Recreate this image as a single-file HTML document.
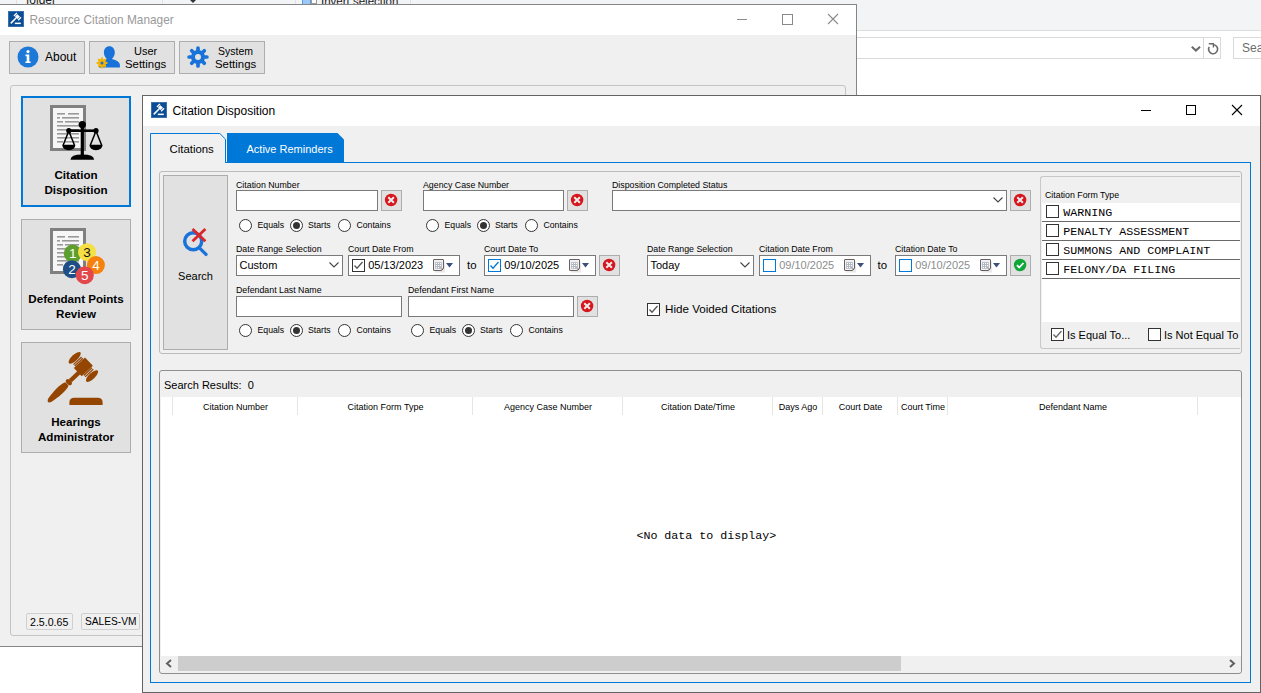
<!DOCTYPE html>
<html><head><meta charset="utf-8"><style>
html,body{margin:0;padding:0;width:1261px;height:693px;overflow:hidden;background:#fff}
body>div{position:absolute}
</style></head><body>
<div style="left:0px;top:0px;width:1261px;height:693px;background:#fff"></div>
<div style="left:0px;top:0px;width:1261px;height:4px;background:#f3f4f6"></div>
<div style="left:16px;top:0px;width:1px;height:4px;background:#e3e3e3"></div>
<div style="left:162px;top:0px;width:1px;height:4px;background:#e3e3e3"></div>
<div style="left:295px;top:0px;width:1px;height:4px;background:#e3e3e3"></div>
<div style="left:410px;top:0px;width:1px;height:4px;background:#e3e3e3"></div>
<div style="left:26px;top:-0.16px;font:400 12px 'Liberation Sans', sans-serif;color:#222;line-height:0;white-space:pre;text-align:left;">folder</div>
<div style="left:302px;top:0px;width:9px;height:4px;background:#9cc8f5;border-left:1px solid #5a9de0;border-right:1px solid #5a9de0;box-sizing:border-box"></div>
<div style="left:311px;top:0px;width:6px;height:4px;background:#fff;border:1px solid #9a9a9a;border-top:none;box-sizing:border-box"></div>
<div style="left:321px;top:0.52px;font:400 11.5px 'Liberation Sans', sans-serif;color:#222;line-height:0;white-space:pre;text-align:left;">Invert selection</div>
<svg style="position:absolute;left:189px;top:0px;" width="8" height="4" viewBox="0 0 8 4"><path d="M1 0 L4 3 L7 0 Z" fill="#333"/></svg>
<div style="left:857px;top:0px;width:404px;height:30px;background:#f3f4f6"></div>
<div style="left:857px;top:30px;width:404px;height:1px;background:#dedede"></div>
<div style="left:857px;top:37px;width:364px;height:22px;background:#fff;border:1px solid #d9d9d9;border-left:none;box-sizing:border-box"></div>
<div style="left:1203px;top:37px;width:1px;height:22px;background:#d9d9d9"></div>
<div style="left:1233px;top:37px;width:28px;height:22px;background:#fff;border:1px solid #d9d9d9;border-right:none;box-sizing:border-box"></div>
<div style="left:1242px;top:47.84px;font:400 12px 'Liberation Sans', sans-serif;color:#6d6d6d;line-height:0;white-space:pre;text-align:left;">Sea</div>
<svg style="position:absolute;left:1190px;top:43px;" width="12" height="10" viewBox="0 0 12 10"><path d="M1.8 3.8 L5.9 7.6 L10 3.8" stroke="#6a6a6a" stroke-width="2" fill="none"/></svg>
<svg style="position:absolute;left:1205px;top:40px;" width="16" height="16" viewBox="0 0 16 16"><path d="M8.1 4.7 A4.5 4.5 0 1 1 4.2 6.95" stroke="#6a6a6a" stroke-width="1.6" fill="none"/><path d="M3.8 3.7 H8.4 V7.4" stroke="#6a6a6a" stroke-width="1.4" fill="none"/></svg>
<div style="left:0px;top:4px;width:857px;height:643px;background:#f0f0f0;border:1px solid #858585;border-left:none;box-sizing:border-box"></div>
<div style="left:0px;top:5px;width:856px;height:30px;background:#fff"></div>
<svg style="position:absolute;left:8px;top:11px;" width="16" height="16" viewBox="0 0 16 16"><rect width="16" height="16" fill="#3a6fae"/><rect x="1" y="1" width="14" height="14" fill="#0b4d94"/><g transform="translate(9.5 5.6) rotate(45)" fill="#fff"><rect x="-1.8" y="-1.7" width="3.6" height="3.4"/><rect x="-3.6" y="-2.1" width="1.3" height="4.2"/><rect x="2.3" y="-2.1" width="1.3" height="4.2"/><rect x="-0.75" y="1" width="1.5" height="8.6" rx="0.75"/></g><rect x="6.8" y="11.6" width="6" height="1.5" fill="#fff"/></svg>
<div style="left:29.5px;top:19.89px;font:400 11.85px 'Liberation Sans', sans-serif;color:#9a9a9a;line-height:0;white-space:pre;text-align:left;">Resource Citation Manager</div>
<div style="left:737px;top:19px;width:10px;height:1px;background:#8a8a8a"></div>
<div style="left:782px;top:14px;width:11px;height:11px;border:1px solid #8a8a8a;box-sizing:border-box"></div>
<svg style="position:absolute;left:827px;top:13px;" width="12" height="12" viewBox="0 0 12 12"><path d="M1 1 L11 11 M11 1 L1 11" stroke="#8a8a8a" stroke-width="1.1"/></svg>
<div style="left:9px;top:41px;width:76px;height:33px;background:#e1e1e1;border:1px solid #adadad;box-sizing:border-box;"></div>
<svg style="position:absolute;left:17px;top:46px;" width="22" height="22" viewBox="0 0 22 22"><circle cx="11" cy="11" r="10.5" fill="#1e78d7"/><circle cx="11" cy="5.6" r="1.6" fill="#fff"/><path d="M8.5 8.6 H12.3 V15.4 H13.6 V17 H8.4 V15.4 H9.7 V10.2 H8.5 Z" fill="#fff"/></svg>
<div style="left:45px;top:56.84px;font:400 12px 'Liberation Sans', sans-serif;color:#000;line-height:0;white-space:pre;text-align:left;">About</div>
<div style="left:89px;top:41px;width:86px;height:33px;background:#e1e1e1;border:1px solid #adadad;box-sizing:border-box;"></div>
<svg style="position:absolute;left:94px;top:44px;" width="30" height="26" viewBox="0 0 30 26"><path d="M15.35 2.2 C18.6 2.2 20.8 4.8 20.8 8.3 C20.8 11 19.8 13 18.3 14.3 L18.3 15.2 C22 16 25.8 17.5 25.9 21 L25.9 23.4 L5 23.4 L5 21 C5.5 17.5 9 16 12.4 15.2 L12.4 14.3 C10.9 13 9.9 11 9.9 8.3 C9.9 4.8 12.1 2.2 15.35 2.2 Z" fill="#1872d9"/><g transform="translate(8 18.9)"><circle r="3.9" fill="#f5b400"/><g stroke="#f5b400" stroke-width="2" stroke-linecap="round"><path d="M3.00 0.00 L4.60 0.00"/><path d="M2.12 2.12 L3.25 3.25"/><path d="M0.00 3.00 L0.00 4.60"/><path d="M-2.12 2.12 L-3.25 3.25"/><path d="M-3.00 0.00 L-4.60 0.00"/><path d="M-2.12 -2.12 L-3.25 -3.25"/><path d="M-0.00 -3.00 L-0.00 -4.60"/><path d="M2.12 -2.12 L3.25 -3.25"/></g><circle r="1.5" fill="#1872d9"/></g></svg>
<div style="left:134px;top:51.19px;font:400 11px 'Liberation Sans', sans-serif;color:#000;line-height:0;white-space:pre;text-align:left;">User</div>
<div style="left:125px;top:63.55px;font:400 11.4px 'Liberation Sans', sans-serif;color:#000;line-height:0;white-space:pre;text-align:left;">Settings</div>
<div style="left:179px;top:41px;width:86px;height:33px;background:#e1e1e1;border:1px solid #adadad;box-sizing:border-box;"></div>
<svg style="position:absolute;left:187px;top:46px;" width="22" height="22" viewBox="0 0 22 22"><circle cx="11" cy="11" r="7" fill="#1872d9"/><g stroke="#1872d9" stroke-width="3.7" stroke-linecap="round"><path d="M16.00 11.00 L19.90 11.00"/><path d="M14.54 14.54 L17.29 17.29"/><path d="M11.00 16.00 L11.00 19.90"/><path d="M7.46 14.54 L4.71 17.29"/><path d="M6.00 11.00 L2.10 11.00"/><path d="M7.46 7.46 L4.71 4.71"/><path d="M11.00 6.00 L11.00 2.10"/><path d="M14.54 7.46 L17.29 4.71"/></g><circle cx="11" cy="11" r="3" fill="#e1e1e1"/></svg>
<div style="left:218px;top:51.36px;font:400 10.5px 'Liberation Sans', sans-serif;color:#000;line-height:0;white-space:pre;text-align:left;">System</div>
<div style="left:215px;top:63.55px;font:400 11.4px 'Liberation Sans', sans-serif;color:#000;line-height:0;white-space:pre;text-align:left;">Settings</div>
<div style="left:10px;top:85px;width:836px;height:551px;border:1px solid #c4c4c4;border-radius:3px;box-sizing:border-box"></div>
<div style="left:21px;top:96px;width:110px;height:111px;background:#e1e1e1;border:2px solid #0078d7;box-sizing:border-box"></div>
<div style="left:21px;top:219px;width:110px;height:111px;background:#e1e1e1;border:1px solid #adadad;box-sizing:border-box;"></div>
<div style="left:21px;top:342px;width:110px;height:111px;background:#e1e1e1;border:1px solid #adadad;box-sizing:border-box;"></div>
<svg style="position:absolute;left:50px;top:105px;" width="36" height="46" viewBox="0 0 36 46"><rect x="0" y="0" width="36" height="46" fill="#808080"/><rect x="3" y="3" width="30" height="40" fill="#f6f6f6"/><rect x="7" y="8" width="8" height="1.6" fill="#9a9a9a"/><rect x="18" y="8" width="11" height="1.6" fill="#9a9a9a"/><rect x="7" y="12" width="3" height="1.6" fill="#9a9a9a"/><rect x="12" y="12" width="17" height="1.6" fill="#9a9a9a"/><rect x="7" y="16" width="6" height="1.6" fill="#9a9a9a"/><rect x="15" y="16" width="14" height="1.6" fill="#9a9a9a"/><rect x="7" y="20" width="22" height="1.6" fill="#9a9a9a"/><rect x="7" y="24" width="22" height="1.6" fill="#9a9a9a"/><rect x="7" y="28" width="22" height="1.6" fill="#9a9a9a"/><rect x="7" y="32" width="22" height="1.6" fill="#9a9a9a"/><rect x="7" y="36" width="6" height="1.6" fill="#9a9a9a"/><rect x="15" y="36" width="14" height="1.6" fill="#9a9a9a"/></svg>
<svg style="position:absolute;left:58px;top:118px;" width="48" height="44" viewBox="0 0 48 44"><g fill="#000"><circle cx="24.3" cy="6.6" r="3.7"/><rect x="22.7" y="6" width="3.2" height="33"/><rect x="10.8" y="11.4" width="27.2" height="2.6"/><circle cx="10.8" cy="12.7" r="2.6"/><circle cx="38" cy="12.7" r="2.6"/><path d="M4.2 26.8 H17.4 Q17 32.2 10.8 32.2 Q4.6 32.2 4.2 26.8 Z M31.4 26.8 H44.6 Q44.2 32.2 38 32.2 Q31.8 32.2 31.4 26.8 Z"/><path d="M12.5 41.8 Q12.5 36.6 24.3 36.6 Q36.1 36.6 36.1 41.8 Z"/></g><path d="M10.8 13 L5.2 27 M10.8 13 L16.4 27 M38 13 L32.4 27 M38 13 L43.6 27" stroke="#000" stroke-width="1.5" fill="none"/></svg>
<div style="left:21px;top:175.48px;width:110px;font:700 11.6px 'Liberation Sans', sans-serif;color:#000;line-height:0;white-space:pre;text-align:center;">Citation</div>
<div style="left:21px;top:190.48px;width:110px;font:700 11.6px 'Liberation Sans', sans-serif;color:#000;line-height:0;white-space:pre;text-align:center;">Disposition</div>
<svg style="position:absolute;left:50px;top:228px;" width="36" height="46" viewBox="0 0 36 46"><rect x="0" y="0" width="36" height="46" fill="#808080"/><rect x="3" y="3" width="30" height="40" fill="#f6f6f6"/><rect x="7" y="8" width="8" height="1.6" fill="#9a9a9a"/><rect x="18" y="8" width="11" height="1.6" fill="#9a9a9a"/><rect x="7" y="12" width="3" height="1.6" fill="#9a9a9a"/><rect x="12" y="12" width="17" height="1.6" fill="#9a9a9a"/><rect x="7" y="16" width="6" height="1.6" fill="#9a9a9a"/><rect x="15" y="16" width="14" height="1.6" fill="#9a9a9a"/><rect x="7" y="20" width="22" height="1.6" fill="#9a9a9a"/><rect x="7" y="24" width="22" height="1.6" fill="#9a9a9a"/><rect x="7" y="28" width="22" height="1.6" fill="#9a9a9a"/><rect x="7" y="32" width="22" height="1.6" fill="#9a9a9a"/><rect x="7" y="36" width="6" height="1.6" fill="#9a9a9a"/><rect x="15" y="36" width="14" height="1.6" fill="#9a9a9a"/></svg>
<svg style="position:absolute;left:60px;top:240px;" width="50" height="50" viewBox="0 0 50 50"><circle cx="12.8" cy="13.5" r="9" fill="#5d9e2c"/><text x="12.8" y="18.3" font-family="Liberation Sans" font-size="13.5" fill="#fff" text-anchor="middle">1</text><circle cx="27.1" cy="12.2" r="9" fill="#f6df45"/><text x="27.1" y="17.0" font-family="Liberation Sans" font-size="13.5" fill="#111" text-anchor="middle">3</text><circle cx="35.9" cy="25.1" r="9" fill="#f6820d"/><text x="35.9" y="29.900000000000002" font-family="Liberation Sans" font-size="13.5" fill="#fff" text-anchor="middle">4</text><circle cx="11.9" cy="29.2" r="9" fill="#1f4d86"/><text x="11.9" y="34.0" font-family="Liberation Sans" font-size="13.5" fill="#fff" text-anchor="middle">2</text><circle cx="24.8" cy="35.2" r="9" fill="#e2474b"/><text x="24.8" y="40.0" font-family="Liberation Sans" font-size="13.5" fill="#fff" text-anchor="middle">5</text></svg>
<div style="left:21px;top:298.58px;width:110px;font:700 11.6px 'Liberation Sans', sans-serif;color:#000;line-height:0;white-space:pre;text-align:center;">Defendant Points</div>
<div style="left:21px;top:313.58px;width:110px;font:700 11.6px 'Liberation Sans', sans-serif;color:#000;line-height:0;white-space:pre;text-align:center;">Review</div>
<svg style="position:absolute;left:44px;top:346px;" width="64" height="64" viewBox="0 0 64 64"><g fill="#944500"><g transform="translate(39.35 20.9) rotate(46.5)"><ellipse cx="-12.6" cy="0" rx="3" ry="7.9"/><ellipse cx="12.6" cy="0" rx="3" ry="7.9"/><rect x="-9.1" y="-5.6" width="1.3" height="11.2"/><rect x="-7.2" y="-5.6" width="1.3" height="11.2"/><rect x="7.8" y="-5.6" width="1.3" height="11.2"/><rect x="5.9" y="-5.6" width="1.3" height="11.2"/><rect x="-5.7" y="-7.7" width="11.4" height="15.4"/><rect x="-1.1" y="7" width="4.4" height="12"/><ellipse cx="1.1" cy="21" rx="3.6" ry="2.3"/><path d="M-1.2 23.6 C-3.6 28 -2.8 40 -1.2 47.5 Q1.1 52 3.4 47.5 C5.0 40 5.8 28 3.4 23.6 Z"/></g><path d="M25.4 59.1 V56.2 Q25.4 51.7 30.4 51.7 H53.6 Q58.6 51.7 58.6 56.2 V59.1 Z"/></g></svg>
<div style="left:21px;top:421.68px;width:110px;font:700 11.6px 'Liberation Sans', sans-serif;color:#000;line-height:0;white-space:pre;text-align:center;">Hearings</div>
<div style="left:21px;top:436.68px;width:110px;font:700 11.6px 'Liberation Sans', sans-serif;color:#000;line-height:0;white-space:pre;text-align:center;">Administrator</div>
<div style="left:26px;top:613px;width:47px;height:17px;border:1px solid #cfcfcf;border-radius:2px;box-sizing:border-box"></div>
<div style="left:30px;top:622.33px;font:400 10.6px 'Liberation Sans', sans-serif;color:#000;line-height:0;white-space:pre;text-align:left;">2.5.0.65</div>
<div style="left:81px;top:613px;width:59px;height:17px;border:1px solid #cfcfcf;border-radius:2px;box-sizing:border-box"></div>
<div style="left:85px;top:622.47px;font:400 10.2px 'Liberation Sans', sans-serif;color:#000;line-height:0;white-space:pre;text-align:left;">SALES-VM</div>
<div style="left:142px;top:95px;width:1119px;height:598px;background:#f0f0f0;border:1px solid #646464;box-sizing:border-box"></div>
<div style="left:143px;top:96px;width:1117px;height:30px;background:#fff"></div>
<svg style="position:absolute;left:151px;top:102px;" width="16" height="16" viewBox="0 0 16 16"><rect width="16" height="16" fill="#3a6fae"/><rect x="1" y="1" width="14" height="14" fill="#0b4d94"/><g transform="translate(9.5 5.6) rotate(45)" fill="#fff"><rect x="-1.8" y="-1.7" width="3.6" height="3.4"/><rect x="-3.6" y="-2.1" width="1.3" height="4.2"/><rect x="2.3" y="-2.1" width="1.3" height="4.2"/><rect x="-0.75" y="1" width="1.5" height="8.6" rx="0.75"/></g><rect x="6.8" y="11.6" width="6" height="1.5" fill="#fff"/></svg>
<div style="left:172.5px;top:110.84px;font:400 12px 'Liberation Sans', sans-serif;color:#000;line-height:0;white-space:pre;text-align:left;">Citation Disposition</div>
<div style="left:1141px;top:110px;width:10px;height:1px;background:#000"></div>
<div style="left:1186px;top:105px;width:10px;height:10px;border:1px solid #000;box-sizing:border-box"></div>
<svg style="position:absolute;left:1231px;top:104px;" width="12" height="12" viewBox="0 0 12 12"><path d="M1 1 L11 11 M11 1 L1 11" stroke="#000" stroke-width="1.1"/></svg>
<!--TABS-->
<div style="left:150px;top:162px;width:1101px;height:521px;border:1px solid #0078d7;box-sizing:border-box"></div>
<svg style="position:absolute;left:150px;top:133px;" width="77" height="30" viewBox="0 0 77 30"><path d="M0.5 30 V0.5 H69.8 L75.5 6.2 V29.5 H77" stroke="#0078d7" stroke-width="1" fill="#f0f0f0"/></svg>
<svg style="position:absolute;left:227px;top:133px;" width="117" height="29" viewBox="0 0 117 29"><path d="M0 0 H110.5 L117 6.5 V29 H0 Z" fill="#0078d7"/></svg>
<div style="left:151px;top:162px;width:74px;height:1px;background:#f0f0f0"></div>
<div style="left:169.5px;top:149.05px;font:400 11.4px 'Liberation Sans', sans-serif;color:#000;line-height:0;white-space:pre;text-align:left;">Citations</div>
<div style="left:246.5px;top:149.19px;font:400 11px 'Liberation Sans', sans-serif;color:#fff;line-height:0;white-space:pre;text-align:left;">Active Reminders</div>
<div style="left:159px;top:171px;width:1083px;height:183px;border:1px solid #bcbcbc;border-radius:3px;box-sizing:border-box"></div>
<div style="left:163px;top:175px;width:65px;height:175px;background:#e1e1e1;border:1px solid #adadad;box-sizing:border-box;"></div>
<svg style="position:absolute;left:180px;top:226px;" width="30" height="32" viewBox="0 0 30 32"><circle cx="13.2" cy="15.3" r="8.5" stroke="#1a73d9" stroke-width="3.5" fill="none"/><path d="M19.9 22.4 L26 28.4" stroke="#1a73d9" stroke-width="3.3" stroke-linecap="round"/><path d="M12.5 2.9 L25.4 15.2 M25.4 2.9 L12.5 15.2" stroke="#d9262b" stroke-width="2.8"/></svg>
<div style="left:163px;top:275.69px;width:65px;font:400 11px 'Liberation Sans', sans-serif;color:#000;line-height:0;white-space:pre;text-align:center;">Search</div>
<div style="left:236px;top:184.95px;font:400 8.8px 'Liberation Sans', sans-serif;color:#000;line-height:0;white-space:pre;text-align:left;">Citation Number</div>
<div style="left:236px;top:190px;width:142px;height:21px;background:#fff;border:1px solid #7a7a7a;box-sizing:border-box;"></div>
<div style="left:381px;top:190px;width:21px;height:21px;background:#e1e1e1;border:1px solid #adadad;box-sizing:border-box;"></div>
<svg style="position:absolute;left:381px;top:190px;" width="21" height="21" viewBox="0 0 21 21"><circle cx="10.1" cy="10.0" r="6.2" fill="#d8141c"/><path d="M7.3 7.2 L12.899999999999999 12.8 M12.899999999999999 7.2 L7.3 12.8" stroke="#ececec" stroke-width="2"/></svg>
<svg style="position:absolute;left:239px;top:218.8px;" width="13" height="13" viewBox="0 0 13 13"><circle cx="6.5" cy="6.5" r="6" stroke="#333" stroke-width="1" fill="#fff"/></svg>
<div style="left:257.5px;top:225.09px;font:400 8.7px 'Liberation Sans', sans-serif;color:#000;line-height:0;white-space:pre;text-align:left;">Equals</div>
<svg style="position:absolute;left:290px;top:218.8px;" width="13" height="13" viewBox="0 0 13 13"><circle cx="6.5" cy="6.5" r="6" stroke="#333" stroke-width="1" fill="#fff"/><circle cx="6.5" cy="6.5" r="3.5" fill="#333"/></svg>
<div style="left:308px;top:225.09px;font:400 8.7px 'Liberation Sans', sans-serif;color:#000;line-height:0;white-space:pre;text-align:left;">Starts</div>
<svg style="position:absolute;left:338px;top:218.8px;" width="13" height="13" viewBox="0 0 13 13"><circle cx="6.5" cy="6.5" r="6" stroke="#333" stroke-width="1" fill="#fff"/></svg>
<div style="left:356.5px;top:225.09px;font:400 8.7px 'Liberation Sans', sans-serif;color:#000;line-height:0;white-space:pre;text-align:left;">Contains</div>
<div style="left:423px;top:184.95px;font:400 8.8px 'Liberation Sans', sans-serif;color:#000;line-height:0;white-space:pre;text-align:left;">Agency Case Number</div>
<div style="left:423px;top:190px;width:141px;height:21px;background:#fff;border:1px solid #7a7a7a;box-sizing:border-box;"></div>
<div style="left:567px;top:190px;width:21px;height:21px;background:#e1e1e1;border:1px solid #adadad;box-sizing:border-box;"></div>
<svg style="position:absolute;left:567px;top:190px;" width="21" height="21" viewBox="0 0 21 21"><circle cx="10.1" cy="10.0" r="6.2" fill="#d8141c"/><path d="M7.3 7.2 L12.899999999999999 12.8 M12.899999999999999 7.2 L7.3 12.8" stroke="#ececec" stroke-width="2"/></svg>
<svg style="position:absolute;left:426px;top:218.8px;" width="13" height="13" viewBox="0 0 13 13"><circle cx="6.5" cy="6.5" r="6" stroke="#333" stroke-width="1" fill="#fff"/></svg>
<div style="left:444.5px;top:225.09px;font:400 8.7px 'Liberation Sans', sans-serif;color:#000;line-height:0;white-space:pre;text-align:left;">Equals</div>
<svg style="position:absolute;left:477px;top:218.8px;" width="13" height="13" viewBox="0 0 13 13"><circle cx="6.5" cy="6.5" r="6" stroke="#333" stroke-width="1" fill="#fff"/><circle cx="6.5" cy="6.5" r="3.5" fill="#333"/></svg>
<div style="left:495px;top:225.09px;font:400 8.7px 'Liberation Sans', sans-serif;color:#000;line-height:0;white-space:pre;text-align:left;">Starts</div>
<svg style="position:absolute;left:525px;top:218.8px;" width="13" height="13" viewBox="0 0 13 13"><circle cx="6.5" cy="6.5" r="6" stroke="#333" stroke-width="1" fill="#fff"/></svg>
<div style="left:543.5px;top:225.09px;font:400 8.7px 'Liberation Sans', sans-serif;color:#000;line-height:0;white-space:pre;text-align:left;">Contains</div>
<div style="left:612px;top:184.95px;font:400 8.8px 'Liberation Sans', sans-serif;color:#000;line-height:0;white-space:pre;text-align:left;">Disposition Completed Status</div>
<div style="left:612px;top:190px;width:395px;height:21px;background:#fff;border:1px solid #7a7a7a;box-sizing:border-box;"></div>
<svg style="position:absolute;left:993px;top:197px;" width="10" height="6" viewBox="0 0 10 6"><path d="M0.5 0.5 L5 5 L9.5 0.5" stroke="#444" stroke-width="1.1" fill="none"/></svg>
<div style="left:1010px;top:190px;width:21px;height:21px;background:#e1e1e1;border:1px solid #adadad;box-sizing:border-box;"></div>
<svg style="position:absolute;left:1010px;top:190px;" width="21" height="21" viewBox="0 0 21 21"><circle cx="10.1" cy="10.0" r="6.2" fill="#d8141c"/><path d="M7.3 7.2 L12.899999999999999 12.8 M12.899999999999999 7.2 L7.3 12.8" stroke="#ececec" stroke-width="2"/></svg>
<div style="left:236px;top:248.95px;font:400 8.8px 'Liberation Sans', sans-serif;color:#000;line-height:0;white-space:pre;text-align:left;">Date Range Selection</div>
<div style="left:236px;top:255px;width:107px;height:21px;background:#fff;border:1px solid #7a7a7a;box-sizing:border-box;"></div>
<div style="left:239.5px;top:265.19px;font:400 11px 'Liberation Sans', sans-serif;color:#000;line-height:0;white-space:pre;text-align:left;">Custom</div>
<svg style="position:absolute;left:329px;top:262px;" width="10" height="6" viewBox="0 0 10 6"><path d="M0.5 0.5 L5 5 L9.5 0.5" stroke="#444" stroke-width="1.1" fill="none"/></svg>
<div style="left:348px;top:248.95px;font:400 8.8px 'Liberation Sans', sans-serif;color:#000;line-height:0;white-space:pre;text-align:left;">Court Date From</div>
<div style="left:348px;top:255px;width:112px;height:21px;background:#fff;border:1px solid #7a7a7a;box-sizing:border-box;"></div>
<svg style="position:absolute;left:352px;top:259px;" width="13" height="13" viewBox="0 0 13 13"><rect x="0.5" y="0.5" width="12" height="12" stroke="#333" stroke-width="1" fill="#fff"/><path d="M2.5 6.5 L5 9.2 L10.5 3" stroke="#555" stroke-width="1.3" fill="none"/></svg>
<div style="left:368.2px;top:265.49px;font:400 11px 'Liberation Sans', sans-serif;color:#000;line-height:0;white-space:pre;text-align:left;">05/13/2023</div>
<svg style="position:absolute;left:433px;top:259px;" width="20" height="14" viewBox="0 0 20 14"><rect x="2" y="2.5" width="10" height="11" fill="#d9d9d9" opacity="0.6"/><path d="M1 0.5 H10 Q10.5 0.5 10.5 1 V9.5 L8.5 11.5 H1 Q0.5 11.5 0.5 11 V1 Q0.5 0.5 1 0.5 Z" stroke="#6b5f5c" stroke-width="1" fill="#eef1f8"/><rect x="2.1" y="3.1" width="6.7" height="6.7" fill="#b1b5bd"/><g fill="#fff"><rect x="2.9" y="3.9" width="1.1" height="1.1"/><rect x="5" y="3.9" width="1.1" height="1.1"/><rect x="7" y="3.9" width="1.1" height="1.1"/><rect x="2.9" y="6" width="1.1" height="1.1"/><rect x="5" y="6" width="1.1" height="1.1"/><rect x="7" y="6" width="1.1" height="1.1"/><rect x="2.9" y="8" width="1.1" height="1.1"/><rect x="5" y="8" width="1.1" height="1.1"/></g><path d="M8.5 11.5 V9.5 H10.5 Z" fill="#6b5f5c"/><path d="M13 4 H20 L16.5 8.5 Z" fill="#3c4f78"/></svg>
<div style="left:467px;top:265.05px;font:400 11.4px 'Liberation Sans', sans-serif;color:#000;line-height:0;white-space:pre;text-align:left;">to</div>
<div style="left:484px;top:248.95px;font:400 8.8px 'Liberation Sans', sans-serif;color:#000;line-height:0;white-space:pre;text-align:left;">Court Date To</div>
<div style="left:484px;top:255px;width:112px;height:21px;background:#fff;border:1px solid #7a7a7a;box-sizing:border-box;"></div>
<svg style="position:absolute;left:488px;top:259px;" width="13" height="13" viewBox="0 0 13 13"><rect x="0.5" y="0.5" width="12" height="12" stroke="#0078d7" stroke-width="1" fill="#fff"/><path d="M2.5 6.5 L5 9.2 L10.5 3" stroke="#0078d7" stroke-width="1.3" fill="none"/></svg>
<div style="left:504.2px;top:265.49px;font:400 11px 'Liberation Sans', sans-serif;color:#000;line-height:0;white-space:pre;text-align:left;">09/10/2025</div>
<svg style="position:absolute;left:569px;top:259px;" width="20" height="14" viewBox="0 0 20 14"><rect x="2" y="2.5" width="10" height="11" fill="#d9d9d9" opacity="0.6"/><path d="M1 0.5 H10 Q10.5 0.5 10.5 1 V9.5 L8.5 11.5 H1 Q0.5 11.5 0.5 11 V1 Q0.5 0.5 1 0.5 Z" stroke="#6b5f5c" stroke-width="1" fill="#eef1f8"/><rect x="2.1" y="3.1" width="6.7" height="6.7" fill="#b1b5bd"/><g fill="#fff"><rect x="2.9" y="3.9" width="1.1" height="1.1"/><rect x="5" y="3.9" width="1.1" height="1.1"/><rect x="7" y="3.9" width="1.1" height="1.1"/><rect x="2.9" y="6" width="1.1" height="1.1"/><rect x="5" y="6" width="1.1" height="1.1"/><rect x="7" y="6" width="1.1" height="1.1"/><rect x="2.9" y="8" width="1.1" height="1.1"/><rect x="5" y="8" width="1.1" height="1.1"/></g><path d="M8.5 11.5 V9.5 H10.5 Z" fill="#6b5f5c"/><path d="M13 4 H20 L16.5 8.5 Z" fill="#3c4f78"/></svg>
<div style="left:599px;top:255px;width:21px;height:21px;background:#e1e1e1;border:1px solid #adadad;box-sizing:border-box;"></div>
<svg style="position:absolute;left:599px;top:255px;" width="21" height="21" viewBox="0 0 21 21"><circle cx="10.1" cy="10.0" r="6.2" fill="#d8141c"/><path d="M7.3 7.2 L12.899999999999999 12.8 M12.899999999999999 7.2 L7.3 12.8" stroke="#ececec" stroke-width="2"/></svg>
<div style="left:647px;top:248.95px;font:400 8.8px 'Liberation Sans', sans-serif;color:#000;line-height:0;white-space:pre;text-align:left;">Date Range Selection</div>
<div style="left:647px;top:255px;width:107px;height:21px;background:#fff;border:1px solid #7a7a7a;box-sizing:border-box;"></div>
<div style="left:650.5px;top:265.19px;font:400 11px 'Liberation Sans', sans-serif;color:#000;line-height:0;white-space:pre;text-align:left;">Today</div>
<svg style="position:absolute;left:740px;top:262px;" width="10" height="6" viewBox="0 0 10 6"><path d="M0.5 0.5 L5 5 L9.5 0.5" stroke="#444" stroke-width="1.1" fill="none"/></svg>
<div style="left:759px;top:248.95px;font:400 8.8px 'Liberation Sans', sans-serif;color:#000;line-height:0;white-space:pre;text-align:left;">Citation Date From</div>
<div style="left:759px;top:255px;width:112px;height:21px;background:#fff;border:1px solid #7a7a7a;box-sizing:border-box;"></div>
<svg style="position:absolute;left:763px;top:259px;" width="13" height="13" viewBox="0 0 13 13"><rect x="0.5" y="0.5" width="12" height="12" stroke="#0078d7" stroke-width="1" fill="#fff"/></svg>
<div style="left:779.2px;top:265.49px;font:400 11px 'Liberation Sans', sans-serif;color:#8d8d8d;line-height:0;white-space:pre;text-align:left;">09/10/2025</div>
<svg style="position:absolute;left:844px;top:259px;" width="20" height="14" viewBox="0 0 20 14"><rect x="2" y="2.5" width="10" height="11" fill="#d9d9d9" opacity="0.6"/><path d="M1 0.5 H10 Q10.5 0.5 10.5 1 V9.5 L8.5 11.5 H1 Q0.5 11.5 0.5 11 V1 Q0.5 0.5 1 0.5 Z" stroke="#6b5f5c" stroke-width="1" fill="#eef1f8"/><rect x="2.1" y="3.1" width="6.7" height="6.7" fill="#b1b5bd"/><g fill="#fff"><rect x="2.9" y="3.9" width="1.1" height="1.1"/><rect x="5" y="3.9" width="1.1" height="1.1"/><rect x="7" y="3.9" width="1.1" height="1.1"/><rect x="2.9" y="6" width="1.1" height="1.1"/><rect x="5" y="6" width="1.1" height="1.1"/><rect x="7" y="6" width="1.1" height="1.1"/><rect x="2.9" y="8" width="1.1" height="1.1"/><rect x="5" y="8" width="1.1" height="1.1"/></g><path d="M8.5 11.5 V9.5 H10.5 Z" fill="#6b5f5c"/><path d="M13 4 H20 L16.5 8.5 Z" fill="#3c4f78"/></svg>
<div style="left:877.5px;top:265.05px;font:400 11.4px 'Liberation Sans', sans-serif;color:#000;line-height:0;white-space:pre;text-align:left;">to</div>
<div style="left:895px;top:248.95px;font:400 8.8px 'Liberation Sans', sans-serif;color:#000;line-height:0;white-space:pre;text-align:left;">Citation Date To</div>
<div style="left:895px;top:255px;width:112px;height:21px;background:#fff;border:1px solid #7a7a7a;box-sizing:border-box;"></div>
<svg style="position:absolute;left:899px;top:259px;" width="13" height="13" viewBox="0 0 13 13"><rect x="0.5" y="0.5" width="12" height="12" stroke="#0078d7" stroke-width="1" fill="#fff"/></svg>
<div style="left:915.2px;top:265.49px;font:400 11px 'Liberation Sans', sans-serif;color:#8d8d8d;line-height:0;white-space:pre;text-align:left;">09/10/2025</div>
<svg style="position:absolute;left:980px;top:259px;" width="20" height="14" viewBox="0 0 20 14"><rect x="2" y="2.5" width="10" height="11" fill="#d9d9d9" opacity="0.6"/><path d="M1 0.5 H10 Q10.5 0.5 10.5 1 V9.5 L8.5 11.5 H1 Q0.5 11.5 0.5 11 V1 Q0.5 0.5 1 0.5 Z" stroke="#6b5f5c" stroke-width="1" fill="#eef1f8"/><rect x="2.1" y="3.1" width="6.7" height="6.7" fill="#b1b5bd"/><g fill="#fff"><rect x="2.9" y="3.9" width="1.1" height="1.1"/><rect x="5" y="3.9" width="1.1" height="1.1"/><rect x="7" y="3.9" width="1.1" height="1.1"/><rect x="2.9" y="6" width="1.1" height="1.1"/><rect x="5" y="6" width="1.1" height="1.1"/><rect x="7" y="6" width="1.1" height="1.1"/><rect x="2.9" y="8" width="1.1" height="1.1"/><rect x="5" y="8" width="1.1" height="1.1"/></g><path d="M8.5 11.5 V9.5 H10.5 Z" fill="#6b5f5c"/><path d="M13 4 H20 L16.5 8.5 Z" fill="#3c4f78"/></svg>
<div style="left:1010px;top:255px;width:21px;height:21px;background:#e1e1e1;border:1px solid #adadad;box-sizing:border-box;"></div>
<svg style="position:absolute;left:1010px;top:255px;" width="21" height="21" viewBox="0 0 21 21"><circle cx="10.1" cy="10.0" r="6.2" fill="#11a63a"/><path d="M6.8999999999999995 10.2 L9.2 12.5 L13.5 8.0" stroke="#fff" stroke-width="1.8" fill="none"/></svg>
<div style="left:236px;top:289.95px;font:400 8.8px 'Liberation Sans', sans-serif;color:#000;line-height:0;white-space:pre;text-align:left;">Defendant Last Name</div>
<div style="left:236px;top:296px;width:166px;height:21px;background:#fff;border:1px solid #7a7a7a;box-sizing:border-box;"></div>
<svg style="position:absolute;left:239px;top:323.7px;" width="13" height="13" viewBox="0 0 13 13"><circle cx="6.5" cy="6.5" r="6" stroke="#333" stroke-width="1" fill="#fff"/></svg>
<div style="left:257.5px;top:329.99px;font:400 8.7px 'Liberation Sans', sans-serif;color:#000;line-height:0;white-space:pre;text-align:left;">Equals</div>
<svg style="position:absolute;left:290px;top:323.7px;" width="13" height="13" viewBox="0 0 13 13"><circle cx="6.5" cy="6.5" r="6" stroke="#333" stroke-width="1" fill="#fff"/><circle cx="6.5" cy="6.5" r="3.5" fill="#333"/></svg>
<div style="left:308px;top:329.99px;font:400 8.7px 'Liberation Sans', sans-serif;color:#000;line-height:0;white-space:pre;text-align:left;">Starts</div>
<svg style="position:absolute;left:338px;top:323.7px;" width="13" height="13" viewBox="0 0 13 13"><circle cx="6.5" cy="6.5" r="6" stroke="#333" stroke-width="1" fill="#fff"/></svg>
<div style="left:356.5px;top:329.99px;font:400 8.7px 'Liberation Sans', sans-serif;color:#000;line-height:0;white-space:pre;text-align:left;">Contains</div>
<div style="left:408px;top:289.95px;font:400 8.8px 'Liberation Sans', sans-serif;color:#000;line-height:0;white-space:pre;text-align:left;">Defendant First Name</div>
<div style="left:408px;top:296px;width:166px;height:21px;background:#fff;border:1px solid #7a7a7a;box-sizing:border-box;"></div>
<div style="left:577px;top:296px;width:21px;height:21px;background:#e1e1e1;border:1px solid #adadad;box-sizing:border-box;"></div>
<svg style="position:absolute;left:577px;top:296px;" width="21" height="21" viewBox="0 0 21 21"><circle cx="10.1" cy="10.0" r="6.2" fill="#d8141c"/><path d="M7.3 7.2 L12.899999999999999 12.8 M12.899999999999999 7.2 L7.3 12.8" stroke="#ececec" stroke-width="2"/></svg>
<svg style="position:absolute;left:411px;top:323.7px;" width="13" height="13" viewBox="0 0 13 13"><circle cx="6.5" cy="6.5" r="6" stroke="#333" stroke-width="1" fill="#fff"/></svg>
<div style="left:429.5px;top:329.99px;font:400 8.7px 'Liberation Sans', sans-serif;color:#000;line-height:0;white-space:pre;text-align:left;">Equals</div>
<svg style="position:absolute;left:462px;top:323.7px;" width="13" height="13" viewBox="0 0 13 13"><circle cx="6.5" cy="6.5" r="6" stroke="#333" stroke-width="1" fill="#fff"/><circle cx="6.5" cy="6.5" r="3.5" fill="#333"/></svg>
<div style="left:480px;top:329.99px;font:400 8.7px 'Liberation Sans', sans-serif;color:#000;line-height:0;white-space:pre;text-align:left;">Starts</div>
<svg style="position:absolute;left:510px;top:323.7px;" width="13" height="13" viewBox="0 0 13 13"><circle cx="6.5" cy="6.5" r="6" stroke="#333" stroke-width="1" fill="#fff"/></svg>
<div style="left:528.5px;top:329.99px;font:400 8.7px 'Liberation Sans', sans-serif;color:#000;line-height:0;white-space:pre;text-align:left;">Contains</div>
<svg style="position:absolute;left:647px;top:303px;" width="13" height="13" viewBox="0 0 13 13"><rect x="0.5" y="0.5" width="12" height="12" stroke="#333" stroke-width="1" fill="#fff"/><path d="M2.5 6.5 L5 9.2 L10.5 3" stroke="#555" stroke-width="1.3" fill="none"/></svg>
<div style="left:665px;top:308.96px;font:400 11.65px 'Liberation Sans', sans-serif;color:#000;line-height:0;white-space:pre;text-align:left;">Hide Voided Citations</div>
<div style="left:1040px;top:176px;width:200px;height:173px;border:1px solid #c8c8c8;border-right:none;border-radius:3px 0 0 3px;box-sizing:border-box"></div>
<div style="left:1045px;top:194.95px;font:400 8.8px 'Liberation Sans', sans-serif;color:#000;line-height:0;white-space:pre;text-align:left;">Citation Form Type</div>
<div style="left:1042px;top:203px;width:198px;height:119px;background:#fff"></div>
<svg style="position:absolute;left:1046px;top:205px;" width="13" height="13" viewBox="0 0 13 13"><rect x="0.5" y="0.5" width="12" height="12" stroke="#333" stroke-width="1" fill="#fff"/></svg>
<div style="left:1063.3px;top:212.89px;font:400 11.67px 'Liberation Mono', monospace;color:#000;line-height:0;white-space:pre;text-align:left;">WARNING</div>
<div style="left:1042px;top:221px;width:198px;height:1px;background:#6a6a6a"></div>
<svg style="position:absolute;left:1046px;top:224px;" width="13" height="13" viewBox="0 0 13 13"><rect x="0.5" y="0.5" width="12" height="12" stroke="#333" stroke-width="1" fill="#fff"/></svg>
<div style="left:1063.3px;top:231.89px;font:400 11.67px 'Liberation Mono', monospace;color:#000;line-height:0;white-space:pre;text-align:left;">PENALTY ASSESSMENT</div>
<div style="left:1042px;top:240px;width:198px;height:1px;background:#6a6a6a"></div>
<svg style="position:absolute;left:1046px;top:243px;" width="13" height="13" viewBox="0 0 13 13"><rect x="0.5" y="0.5" width="12" height="12" stroke="#333" stroke-width="1" fill="#fff"/></svg>
<div style="left:1063.3px;top:250.89px;font:400 11.67px 'Liberation Mono', monospace;color:#000;line-height:0;white-space:pre;text-align:left;">SUMMONS AND COMPLAINT</div>
<div style="left:1042px;top:259px;width:198px;height:1px;background:#6a6a6a"></div>
<svg style="position:absolute;left:1046px;top:262px;" width="13" height="13" viewBox="0 0 13 13"><rect x="0.5" y="0.5" width="12" height="12" stroke="#333" stroke-width="1" fill="#fff"/></svg>
<div style="left:1063.3px;top:269.89px;font:400 11.67px 'Liberation Mono', monospace;color:#000;line-height:0;white-space:pre;text-align:left;">FELONY/DA FILING</div>
<div style="left:1042px;top:278px;width:198px;height:1px;background:#6a6a6a"></div>
<svg style="position:absolute;left:1051px;top:328px;" width="13" height="13" viewBox="0 0 13 13"><rect x="0.5" y="0.5" width="12" height="12" stroke="#333" stroke-width="1" fill="#fff"/><path d="M2.5 6.5 L5 9.2 L10.5 3" stroke="#666" stroke-width="1.3" fill="none"/></svg>
<div style="left:1067px;top:335.19px;font:400 11px 'Liberation Sans', sans-serif;color:#000;line-height:0;white-space:pre;text-align:left;">Is Equal To...</div>
<svg style="position:absolute;left:1148px;top:328px;" width="13" height="13" viewBox="0 0 13 13"><rect x="0.5" y="0.5" width="12" height="12" stroke="#333" stroke-width="1" fill="#fff"/></svg>
<div style="left:1164px;top:335.19px;font:400 11px 'Liberation Sans', sans-serif;color:#000;line-height:0;white-space:pre;text-align:left;">Is Not Equal To</div>
<div style="left:159px;top:370px;width:1083px;height:304px;border:1px solid #8f8f8f;border-radius:3px;box-sizing:border-box"></div>
<div style="left:164px;top:384.79px;font:400 11px 'Liberation Sans', sans-serif;color:#000;line-height:0;white-space:pre;text-align:left;">Search Results:  0</div>
<div style="left:161px;top:397px;width:1080px;height:259px;background:#fff"></div>
<div style="left:172px;top:397px;width:1px;height:18px;background:#e5e5e5"></div>
<div style="left:297px;top:397px;width:1px;height:18px;background:#e5e5e5"></div>
<div style="left:472px;top:397px;width:1px;height:18px;background:#e5e5e5"></div>
<div style="left:622px;top:397px;width:1px;height:18px;background:#e5e5e5"></div>
<div style="left:772px;top:397px;width:1px;height:18px;background:#e5e5e5"></div>
<div style="left:822px;top:397px;width:1px;height:18px;background:#e5e5e5"></div>
<div style="left:897px;top:397px;width:1px;height:18px;background:#e5e5e5"></div>
<div style="left:947px;top:397px;width:1px;height:18px;background:#e5e5e5"></div>
<div style="left:1197px;top:397px;width:1px;height:18px;background:#e5e5e5"></div>
<div style="left:173px;top:406.88px;width:125px;font:400 9px 'Liberation Sans', sans-serif;color:#000;line-height:0;white-space:pre;text-align:center;">Citation Number</div>
<div style="left:298px;top:406.88px;width:175px;font:400 9px 'Liberation Sans', sans-serif;color:#000;line-height:0;white-space:pre;text-align:center;">Citation Form Type</div>
<div style="left:473px;top:406.88px;width:150px;font:400 9px 'Liberation Sans', sans-serif;color:#000;line-height:0;white-space:pre;text-align:center;">Agency Case Number</div>
<div style="left:623px;top:406.88px;width:150px;font:400 9px 'Liberation Sans', sans-serif;color:#000;line-height:0;white-space:pre;text-align:center;">Citation Date/Time</div>
<div style="left:773px;top:406.88px;width:50px;font:400 9px 'Liberation Sans', sans-serif;color:#000;line-height:0;white-space:pre;text-align:center;">Days Ago</div>
<div style="left:823px;top:406.88px;width:75px;font:400 9px 'Liberation Sans', sans-serif;color:#000;line-height:0;white-space:pre;text-align:center;">Court Date</div>
<div style="left:898px;top:406.88px;width:50px;font:400 9px 'Liberation Sans', sans-serif;color:#000;line-height:0;white-space:pre;text-align:center;">Court Time</div>
<div style="left:948px;top:406.88px;width:250px;font:400 9px 'Liberation Sans', sans-serif;color:#000;line-height:0;white-space:pre;text-align:center;">Defendant Name</div>
<div style="left:636.4px;top:535.89px;font:400 11.67px 'Liberation Mono', monospace;color:#000;line-height:0;white-space:pre;text-align:left;">&lt;No data to display&gt;</div>
<div style="left:161px;top:656px;width:1080px;height:16px;background:#f0f0f0"></div>
<div style="left:178px;top:656px;width:723px;height:15px;background:#cdcdcd"></div>
<svg style="position:absolute;left:165px;top:659px;" width="8" height="9" viewBox="0 0 8 9"><path d="M6 1 L2 4.5 L6 8" stroke="#606060" stroke-width="2" fill="none"/></svg>
<svg style="position:absolute;left:1228px;top:659px;" width="8" height="9" viewBox="0 0 8 9"><path d="M2 1 L6 4.5 L2 8" stroke="#606060" stroke-width="2" fill="none"/></svg>
</body></html>
